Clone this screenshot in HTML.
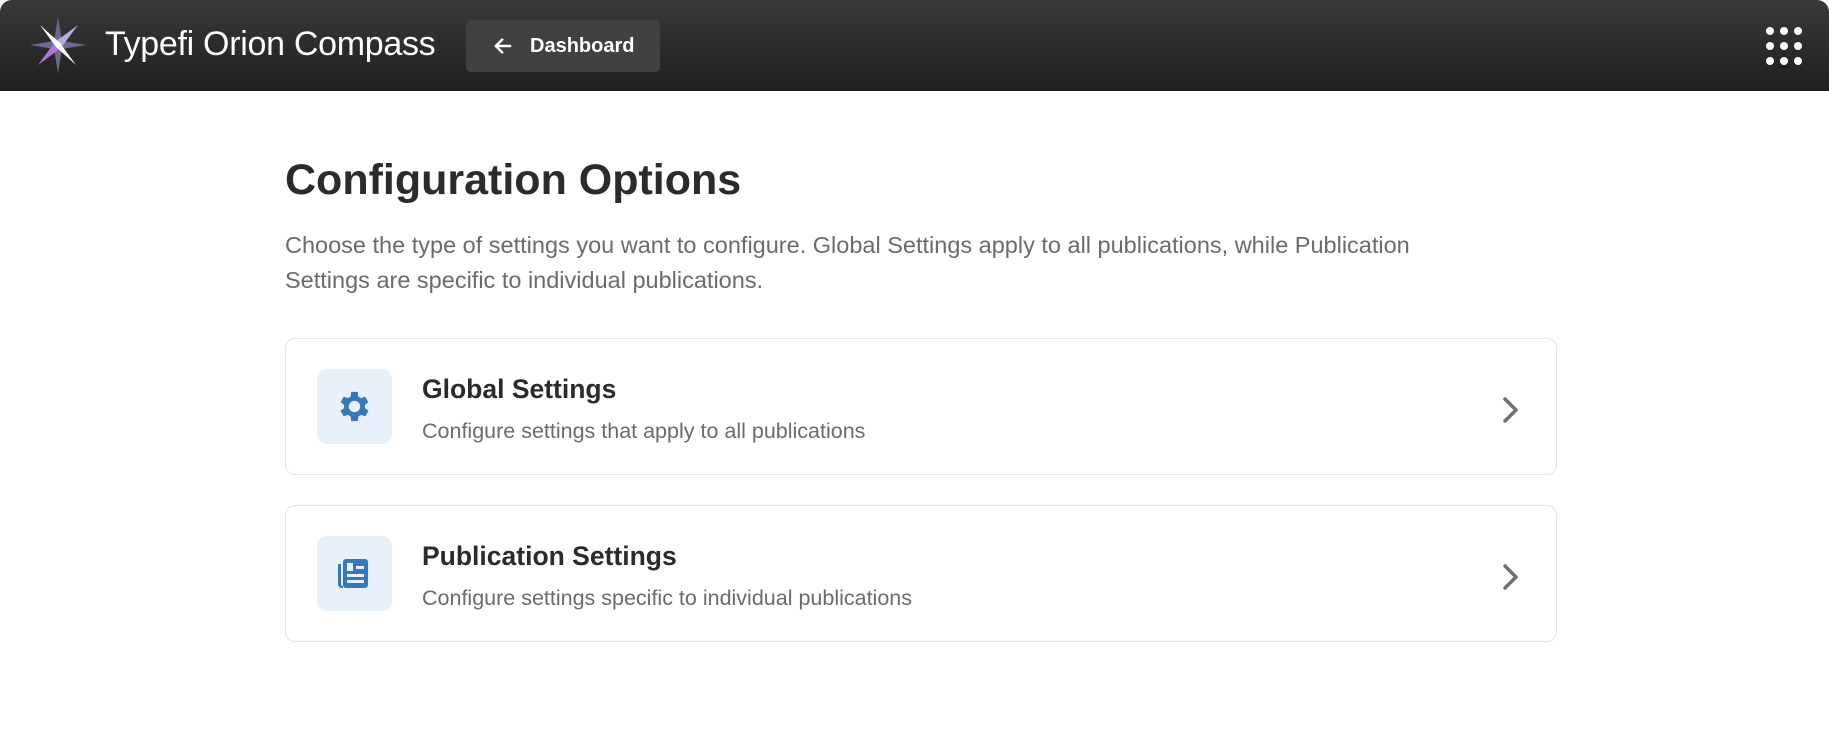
<!DOCTYPE html>
<html><head><meta charset="utf-8"><style>
*{box-sizing:border-box;margin:0;padding:0}
body{width:1829px;height:735px;background:#fff;font-family:"Liberation Sans",sans-serif;overflow:hidden;position:relative}
.hdr{position:absolute;left:0;top:0;width:1829px;height:91px;background:linear-gradient(#393939,#1f1f1f);border-radius:12px 12px 0 0}
.title{position:absolute;left:105px;top:25px;color:#fff;font-size:34px;font-weight:300;letter-spacing:-0.3px}
.btn{position:absolute;left:466px;top:20px;width:194px;height:52px;background:#414141;border-radius:5px;color:#fff;font-weight:bold;font-size:20px;line-height:52px;padding-left:64px}
.btn svg{position:absolute;left:28px;top:18px}
.grid{position:absolute;left:1766px;top:27px}
.grid i{position:absolute;width:8px;height:8px;border-radius:50%;background:#fff}
h1{position:absolute;left:285px;top:156px;font-size:43px;font-weight:bold;color:#2b2b2b}
.p{position:absolute;left:285px;top:228px;width:1180px;font-size:23.5px;line-height:35px;color:#6b6b6b}
.card{position:absolute;left:285px;width:1272px;height:137px;border:1px solid #e3e3e3;border-radius:10px}
.ib{position:absolute;left:31px;top:30px;width:75px;height:75px;background:#e8f0fa;border-radius:10px}
.ib svg{position:absolute;left:18px;top:18px}
.ct{position:absolute;left:136px;top:35px;font-size:26.5px;font-weight:bold;color:#2b2b2b}
.cs{position:absolute;left:136px;top:80px;font-size:21.5px;color:#6b6b6b}
.chev{position:absolute;left:1214px;top:56px}
</style></head><body>
<div class="hdr">
<svg style="position:absolute;left:30px;top:17px" width="56" height="56" viewBox="0 0 56 56">
<polygon points="28,0 32,24 56,28 32,32 28,56 24,32 0,28 24,24" fill="#6c6a90"/>
<polygon points="48,8 31,31 25,25" fill="#b0aee0"/>
<polygon points="8,48 25,25 31,31" fill="#b177d8"/>
<polygon points="10,8 30,26 46,48 26,30" fill="#fff"/>
</svg>
<div class="title">Typefi Orion Compass</div>
<div class="btn"><svg width="18" height="16" viewBox="0 0 22 20"><path d="M20 10H3M10 2L2 10l8 8" stroke="#fff" stroke-width="3" fill="none" stroke-linecap="round" stroke-linejoin="round"/></svg>Dashboard</div>
<div class="grid">
<i style="left:0;top:0"></i><i style="left:14px;top:0"></i><i style="left:28px;top:0"></i>
<i style="left:0;top:15px"></i><i style="left:14px;top:15px"></i><i style="left:28px;top:15px"></i>
<i style="left:0;top:30px"></i><i style="left:14px;top:30px"></i><i style="left:28px;top:30px"></i>
</div>
</div>
<h1>Configuration Options</h1>
<div class="p">Choose the type of settings you want to configure. Global Settings apply to all publications, while Publication Settings are specific to individual publications.</div>
<div class="card" style="top:338px">
<div class="ib"><svg width="39" height="39" viewBox="0 0 24 24"><path fill="#3579b9" d="M19.4 13a7.5 7.5 0 0 0 0-2l2.1-1.6-2-3.5-2.5 1a7 7 0 0 0-1.7-1L15 3h-4l-.4 2.9a7 7 0 0 0-1.7 1l-2.5-1-2 3.5L6.6 11a7.5 7.5 0 0 0 0 2l-2.2 1.6 2 3.5 2.5-1a7 7 0 0 0 1.7 1L11 21h4l.4-2.9a7 7 0 0 0 1.7-1l2.5 1 2-3.5zM13 15.5a3.5 3.5 0 1 1 0-7 3.5 3.5 0 0 1 0 7z" transform="translate(-1 0)"/></svg></div>
<div class="ct">Global Settings</div>
<div class="cs">Configure settings that apply to all publications</div>
<svg class="chev" width="24" height="30" viewBox="0 0 24 30"><path d="M5 4l11 11L5 26" stroke="#707070" stroke-width="3.5" fill="none" stroke-linecap="round" stroke-linejoin="round"/></svg>
</div>
<div class="card" style="top:505px">
<div class="ib"><svg width="39" height="39" viewBox="0 0 39 39"><path fill="#3579b9" d="M3 10h3v20a2 2 0 0 0 2 2v2a4 4 0 0 1-5-4z"/><rect x="8" y="5" width="25" height="29" rx="3" fill="#3579b9"/><rect x="12" y="9" width="6" height="8" fill="#e8f0fa"/><rect x="21" y="12" width="8" height="3" fill="#e8f0fa"/><rect x="12" y="20" width="17" height="3" fill="#e8f0fa"/><rect x="12" y="26" width="17" height="3" fill="#e8f0fa"/></svg></div>
<div class="ct">Publication Settings</div>
<div class="cs">Configure settings specific to individual publications</div>
<svg class="chev" width="24" height="30" viewBox="0 0 24 30"><path d="M5 4l11 11L5 26" stroke="#707070" stroke-width="3.5" fill="none" stroke-linecap="round" stroke-linejoin="round"/></svg>
</div>
</body></html>
